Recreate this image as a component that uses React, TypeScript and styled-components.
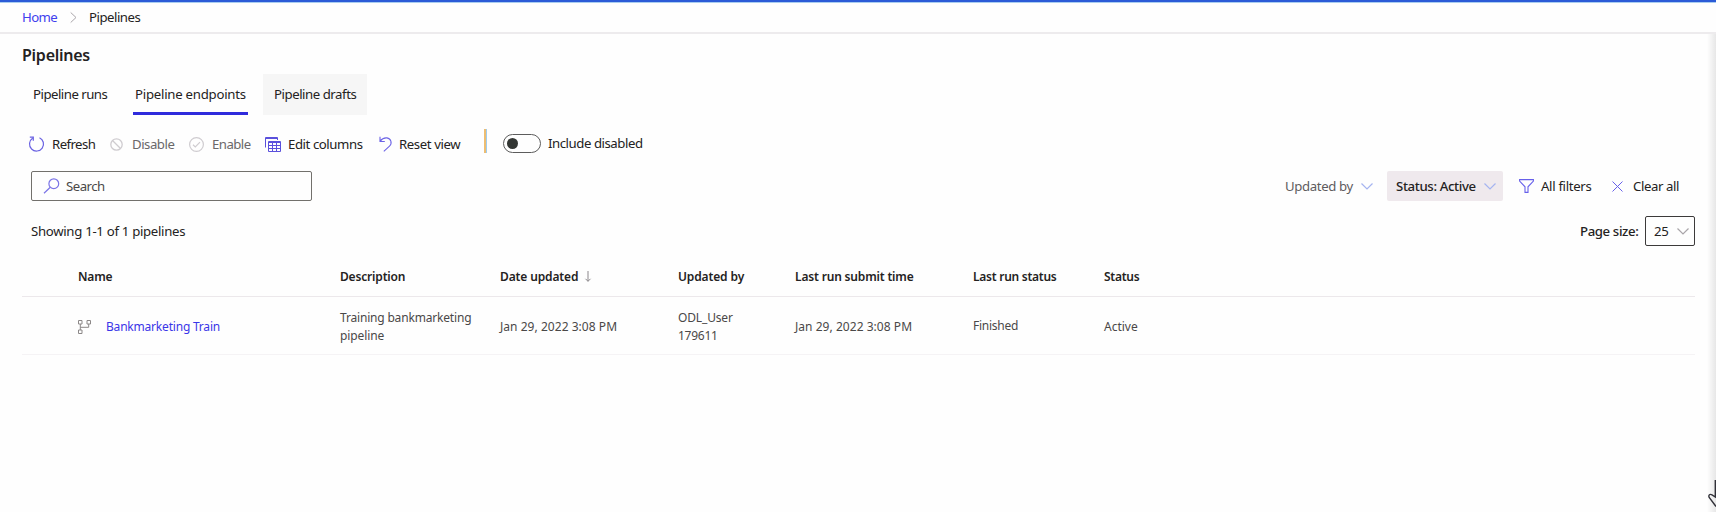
import React from "react";
import styled, { createGlobalStyle, css } from "styled-components";

const GlobalStyle = createGlobalStyle`
  * { box-sizing: border-box; }
  html, body { margin: 0; height: 100%; overflow: hidden; }
  body { background: #fefefe; font-family: "Noto Sans", "Open Sans", sans-serif; color: #1f1d1d; }
`;

const Label = styled.span<{ $w: number; $ls?: number; $size?: number; $weight?: number; $color?: string; $shift?: number }>`
  display: block;
  flex: none;
  width: ${(p) => p.$w}px;
  font-size: ${(p) => p.$size ?? 13.2}px;
  font-weight: ${(p) => p.$weight ?? 400};
  letter-spacing: ${(p) => p.$ls ?? 0}px;
  color: ${(p) => p.$color ?? "#242222"};
  line-height: 18px;
  white-space: nowrap;
  ${(p) => p.$shift && css`margin-top: ${p.$shift}px;`}
`;

const Page = styled.div`
  position: relative;
  width: 1716px;
  height: 512px;
  overflow: hidden;
  border-top: 2px solid #2b5bd7;
`;
const Breadcrumb = styled.nav`
  display: flex;
  align-items: center;
  height: 32px;
  padding: 0 22px 1px;
  border-top: 1px solid #a9cdf0;
  border-bottom: 2px solid #edebed;
`;
const Title = styled.h1`
  margin: 0;
  height: 40px;
  padding: 12px 22px 0;
`;
const Tabs = styled.div`
  display: flex;
  height: 41px;
  padding-left: 22px;
`;
const Tab = styled.div<{ $w: number; $active?: boolean; $hover?: boolean; $ml?: number }>`
  display: flex;
  justify-content: center;
  width: ${(p) => p.$w}px;
  margin-left: ${(p) => p.$ml ?? 0}px;
  padding-top: 11px;
  background: ${(p) => (p.$hover ? "#f6f6f6" : "transparent")};
  border-bottom: ${(p) => (p.$active ? "3px solid #2f2bdc" : "0")};
`;
const Toolbar = styled.div`
  display: flex;
  align-items: center;
  height: 36px;
  margin-top: 10px;
  padding: 2px 0 0 29px;
`;
const Gap = styled.span<{ $w: number }>`
  flex: none;
  width: ${(p) => p.$w}px;
`;
const Icon = styled.svg`
  display: block;
  flex: none;
  fill: none;
  overflow: visible;
`;
const Divider = styled.span`
  width: 3px;
  height: 24px;
  margin-top: -7px;
  border-left: 2px solid #edbd72;
  background: #9ecbee;
`;
const Toggle = styled.span`
  display: flex;
  align-items: center;
  width: 38px;
  height: 19px;
  margin-top: -2px;
  padding-left: 3px;
  border: 1.5px solid #5c5c5c;
  border-radius: 10px;
`;
const Knob = styled.span`
  width: 11px;
  height: 11px;
  border-radius: 50%;
  background: #323633;
`;
const FilterRow = styled.div`
  display: flex;
  align-items: center;
  height: 30px;
  margin-top: 10px;
  padding-left: 31px;
`;
const SearchBox = styled.div`
  display: flex;
  align-items: center;
  width: 281px;
  height: 30px;
  padding-left: 11px;
  border: 1px solid #72706c;
  border-radius: 2px;
`;
const Pill = styled.div`
  display: flex;
  align-items: center;
  width: 116px;
  height: 30px;
  padding-left: 9px;
  border-radius: 2px;
  background: #efe9ed;
`;
const CountRow = styled.div`
  display: flex;
  align-items: center;
  height: 30px;
  margin-top: 15px;
  padding-left: 31px;
`;
const Select = styled.div`
  display: flex;
  align-items: center;
  width: 50px;
  height: 30px;
  padding-left: 8px;
  border: 1px solid #3c3a3a;
  border-radius: 2px;
`;
const Row = styled.div<{ $h: number; $line: string; $top: number }>`
  display: grid;
  grid-template-columns: 262px 160px 178px 117px 178px 131px 1fr;
  align-items: center;
  height: ${(p) => p.$h}px;
  margin: 0 21px 0 22px;
  padding: ${(p) => p.$top}px 0 0 56px;
  border-bottom: 1px solid ${(p) => p.$line};
`;
const Cell = styled.div<{ $up?: number }>`
  display: flex;
  align-items: center;
  padding-bottom: ${(p) => p.$up ?? 0}px;
`;
const Lines = styled.div`
  display: flex;
  flex-direction: column;
`;
const EdgeShade = styled.div`
  position: absolute;
  top: 32px;
  right: 0;
  bottom: 0;
  width: 9px;
  background: linear-gradient(90deg, rgba(0,0,0,0), rgba(0,0,0,0.09));
`;
const Pointer = styled(Icon)`
  position: absolute;
  right: 0;
  bottom: 0;
`;

const Chevron = ({ color = "#a5b4f0" }: { color?: string }) => (
  <Icon width="12" height="7" viewBox="0 0 12 7" stroke={color} strokeWidth="1.2">
    <path d="M.5.5 6 6 11.5.5" />
  </Icon>
);

const small = { $size: 12, $color: "#4a4848" };
const head = { $size: 12, $weight: 600, $color: "#242222" };

export default function App() {
  return (
    <Page>
      <GlobalStyle />
      <Breadcrumb>
        <Label $w={35} $ls={-0.6} $color="#4040ee">Home</Label>
        <Gap $w={13} />
        <Icon width="7" height="11" viewBox="0 0 7 11" stroke="#aaa6aa"><path d="M.7.5 6 5.500.7 10.500" /></Icon>
        <Gap $w={12} />
        <Label $w={51} $ls={-0.49}>Pipelines</Label>
      </Breadcrumb>
      <Title><Label $w={68} $ls={-0.25} $size={16} $weight={600}>Pipelines</Label></Title>
      <Tabs>
        <Tab $w={96}><Label $w={74} $ls={-0.5}>Pipeline runs</Label></Tab>
        <Tab $w={115} $ml={15} $active><Label $w={111} $ls={-0.24}>Pipeline endpoints</Label></Tab>
        <Tab $w={104} $ml={15} $hover><Label $w={82} $ls={-0.45}>Pipeline drafts</Label></Tab>
      </Tabs>
      <Toolbar>
        <Icon width="15" height="16" viewBox="0 0 15 16" stroke="#6a62e2" strokeWidth="1.2">
          <path d="M10.500 1.700A7 7 0 1 1 3.500 2.300M.8 1.200H4.300V4.800" />
        </Icon>
        <Gap $w={8} /><Label $w={43} $ls={-0.57}>Refresh</Label><Gap $w={15} />
        <Icon width="13" height="13" viewBox="0 0 13 13" stroke="#cfccd0" strokeWidth="1.3">
          <circle cx="6.500" cy="6.500" r="5.700" /><path d="M2.500 2.500 10.500 10.500" />
        </Icon>
        <Gap $w={9} /><Label $w={43} $ls={-0.47} $color="#6a686a">Disable</Label><Gap $w={14} />
        <Icon width="15" height="15" viewBox="0 0 15 15" stroke="#cfccd0" strokeWidth="1.2">
          <circle cx="7.500" cy="7.500" r="6.900" /><path d="M4 7.800 6.300 10 11 5.200" />
        </Icon>
        <Gap $w={8} /><Label $w={39} $ls={-0.53} $color="#6a686a">Enable</Label><Gap $w={14} />
        <Icon width="16" height="15" viewBox="0 0 16 15" stroke="#5a50dc" strokeWidth="1">
          <path d="M.5 10.500V.5H12.500V3M.5 1.500H12.500M3.500 4.500H15.500V14.500H3.500ZM3.500 5.500H15.500M3.500 8.500H15.500M3.500 11.500H15.500M7.500 5V14.500M11.500 5V14.500" />
        </Icon>
        <Gap $w={7} /><Label $w={75} $ls={-0.43}>Edit columns</Label><Gap $w={16} />
        <Icon width="13" height="16" viewBox="0 0 13 16" stroke="#6c63e6" strokeWidth="1.1">
          <path d="M1 .8V5.500H5.800M1 5.300C3 2.600 5.500 1.600 8 1.900C12 2.500 13.500 7.300 10.500 10.200L4.800 15.300" />
        </Icon>
        <Gap $w={7} /><Label $w={62} $ls={-0.4}>Reset view</Label><Gap $w={23} />
        <Divider />
        <Gap $w={16} />
        <Toggle><Knob /></Toggle>
        <Gap $w={7} /><Label $w={95} $ls={-0.45} $shift={-3}>Include disabled</Label>
      </Toolbar>
      <FilterRow>
        <SearchBox>
          <Icon width="17" height="16" viewBox="0 0 17 16" stroke="#7b74e6" strokeWidth="1.2">
            <circle cx="10.800" cy="5.700" r="4.900" /><path d="M7.300 9.200 1 15.300" />
          </Icon>
          <Gap $w={6} /><Label $w={39} $ls={-0.5} $color="#4a4848">Search</Label>
        </SearchBox>
        <Gap $w={973} />
        <Label $w={68} $ls={-0.37} $color="#5e5c5e">Updated by</Label><Gap $w={8} /><Chevron /><Gap $w={14} />
        <Pill><Label $w={80} $ls={-0.36} $weight={500}>Status: Active</Label><Gap $w={8} /><Chevron /></Pill>
        <Gap $w={16} />
        <Icon width="15" height="14" viewBox="0 0 15 14" stroke="#6760ea" strokeWidth="1.1">
          <path d="M.6.6H14.400V2L9 7.800V13.400H6V7.800L.6 2Z" />
        </Icon>
        <Gap $w={7} /><Label $w={51} $ls={-0.32}>All filters</Label><Gap $w={20} />
        <Icon width="11" height="11" viewBox="0 0 11 11" stroke="#6760ea" strokeWidth="1"><path d="M.5.5 10.500 10.500M10.500.5.5 10.500" /></Icon>
        <Gap $w={10} /><Label $w={46} $ls={-0.41}>Clear all</Label>
      </FilterRow>
      <CountRow>
        <Label $w={155} $ls={-0.3}>Showing 1-1 of 1 pipelines</Label>
        <Gap $w={1394} />
        <Label $w={59} $ls={-0.38} $weight={500}>Page size:</Label><Gap $w={6} />
        <Select><Label $w={15} $ls={-0.4}>25</Label><Gap $w={8} /><Chevron color="#a9a5a9" /></Select>
      </CountRow>
      <Row $h={51} $line="#ece8eb" $top={11}>
        <Cell><Label {...head} $w={34} $ls={-0.2}>Name</Label></Cell>
        <Cell><Label {...head} $w={65} $ls={-0.17}>Description</Label></Cell>
        <Cell>
          <Label {...head} $w={78} $ls={-0.13}>Date updated</Label><Gap $w={7} />
          <Icon width="6" height="11" viewBox="0 0 6 11" stroke="#8c888c" strokeWidth="1"><path d="M3 0V10.300M.5 7.800 3 10.300 5.500 7.800" /></Icon>
        </Cell>
        <Cell><Label {...head} $w={66} $ls={-0.13}>Updated by</Label></Cell>
        <Cell><Label {...head} $w={118} $ls={-0.17}>Last run submit time</Label></Cell>
        <Cell><Label {...head} $w={83} $ls={-0.26}>Last run status</Label></Cell>
        <Cell><Label {...head} $w={35} $ls={-0.25}>Status</Label></Cell>
      </Row>
      <Row $h={58} $line="#f5f3f5" $top={2}>
        <Cell>
          <Icon width="13" height="14" viewBox="0 0 13 14" stroke="#8c8888" strokeWidth="1">
            <path d="M.5.5H4V4H.5ZM9 .5H12.500V4H9ZM.5 10H4V13.500H.5ZM2.300 4V10M10.700 4V7.300H2.300" />
          </Icon>
          <Gap $w={15} />
          <Label $size={12} $w={113} $ls={-0.2} $color="#3b36e8">Bankmarketing Train</Label>
        </Cell>
        <Cell><Lines><Label {...small} $w={131} $ls={-0.18}>Training bankmarketing</Label><Label {...small} $w={44} $ls={-0.1}>pipeline</Label></Lines></Cell>
        <Cell><Label {...small} $w={117} $ls={0.04}>Jan 29, 2022 3:08 PM</Label></Cell>
        <Cell><Lines><Label {...small} $w={55} $ls={-0.15}>ODL_User</Label><Label {...small} $w={39} $ls={-0.25}>179611</Label></Lines></Cell>
        <Cell><Label {...small} $w={117} $ls={0.04}>Jan 29, 2022 3:08 PM</Label></Cell>
        <Cell $up={2}><Label {...small} $w={45} $ls={-0.25}>Finished</Label></Cell>
        <Cell><Label {...small} $w={34}>Active</Label></Cell>
      </Row>
      <EdgeShade />
      <Pointer width="8" height="33" viewBox="0 0 8 33" stroke="#303038" strokeWidth="1.4">
        <path d="M7.300 1V18L4 15.800C1.500 14.500 .3 16.500 1.200 18.500L8 27.500" />
      </Pointer>
    </Page>
  );
}
